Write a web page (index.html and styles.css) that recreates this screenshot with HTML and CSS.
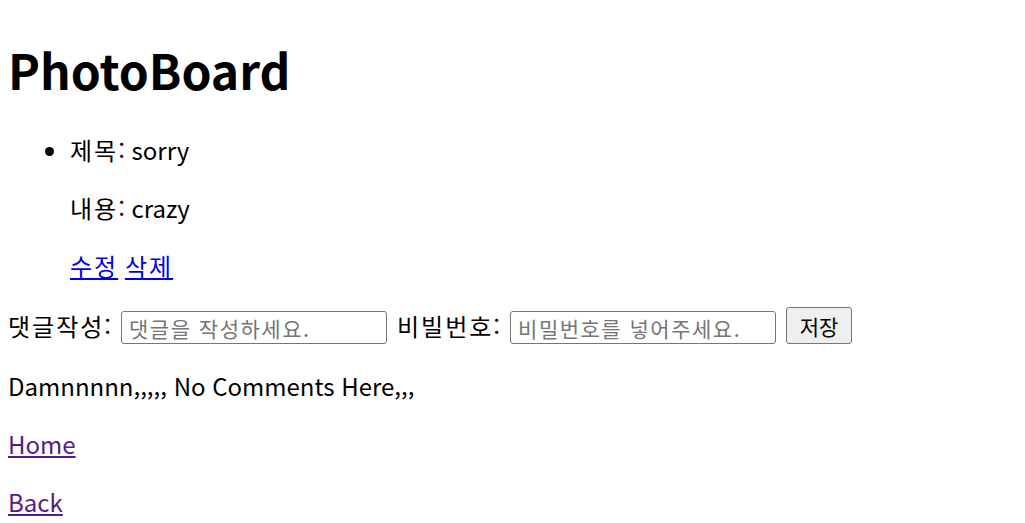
FILE: index.html
```html
<!DOCTYPE html>
<html lang="ko">
<head>
<meta charset="utf-8">
<title>PhotoBoard</title>
<link rel="stylesheet" href="styles.css">
</head>
<body>
<h1 class="title">PhotoBoard</h1>
<ul class="posts">
  <li class="post">
    <p class="line"><span class="ko">제목</span>: sorry</p>
    <p class="line"><span class="ko">내용</span>: crazy</p>
    <p class="line"><a class="link ko" href="#">수정</a> <a class="link ko" href="#">삭제</a></p>
  </li>
</ul>
<form class="comment-form">
  <label class="label">댓글작성:</label>
  <input class="field" type="text" placeholder="댓글을 작성하세요.">
  <label class="label">비빌번호:</label>
  <input class="field" type="password" placeholder="비밀번호를 넣어주세요.">
  <button class="btn" type="button">저장</button>
</form>
<p class="line">Damnnnnn,,,,, No Comments Here,,,</p>
<p class="line"><a class="link visited" href="#">Home</a></p>
<p class="line"><a class="link visited" href="#">Back</a></p>
</body>
</html>
```
FILE: styles.css
```css
html, body {
  background: #fff;
}
body {
  margin: 8px;
  font-family: "Noto Sans CJK KR", "Noto Sans", sans-serif;
  font-size: 24px;
  line-height: 34px;
  color: #000;
}
.title {
  font-size: 48px;
  line-height: 76px;
  font-weight: 700;
  margin: 23px 0 26px;
}
.posts {
  margin: 24px 0;
  padding-left: 62px;
}
.line {
  margin: 24px 0;
}
.post .line:first-child {
  margin-top: 0;
}
.post .line:last-child {
  margin-bottom: 0;
}
.ko {
  letter-spacing: 2px;
}
.link {
  color: #0000ee;
  text-decoration: underline;
}
.link.visited {
  color: #551a8b;
}
.comment-form {
  display: flex;
  align-items: flex-end;
  height: 37px;
  margin: 23px 0 25px;
}
.label {
  align-self: center;
  margin-right: 8px;
  letter-spacing: 2px;
}
.field {
  box-sizing: border-box;
  width: 266px;
  height: 33px;
  margin: 0 10px 0 0;
  padding: 0 7px;
  border: 1px solid #767676;
  border-radius: 3px;
  font-family: "Noto Sans CJK KR", "Noto Sans", sans-serif;
  font-size: 21px;
  letter-spacing: 1.5px;
  color: #000;
  background: #fff;
}
.field::placeholder {
  color: #757575;
}
.btn {
  box-sizing: border-box;
  width: 66px;
  height: 37px;
  padding: 0;
  border: 1px solid #767676;
  border-radius: 3px;
  background: #efefef;
  font-family: "Noto Sans CJK KR", "Noto Sans", sans-serif;
  font-size: 21px;
  color: #000;
}
```
